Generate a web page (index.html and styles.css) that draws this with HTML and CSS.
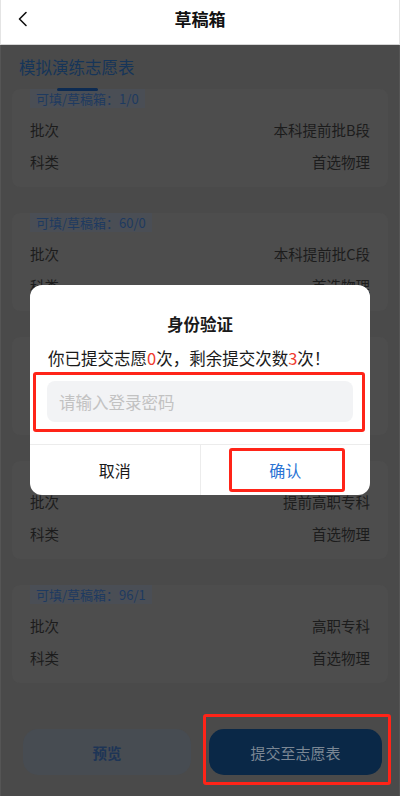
FILE: index.html
```html
<!DOCTYPE html>
<html>
<head>
    <meta charset="utf-8">
    <title>草稿箱</title>
    <link rel="stylesheet" href="styles.css">
</head>
<body>
    <div class="app">
        <div class="header">
            <span class="back">
                <svg width="12" height="16" viewBox="0 0 12 16"><path d="M9 1.5 L2.5 8 L9 14.5" fill="none" stroke="#111" stroke-width="1.6" stroke-linecap="round" stroke-linejoin="round"/></svg>
            </span>
            <h1>草稿箱</h1>
        </div>

        <div class="page">
            <div class="content">
                <div class="section-title">模拟演练志愿表</div>
                <div class="tab-bar"></div>

                <div class="card">
                    <span class="badge">可填/草稿箱：1/0</span>
                    <div class="row"><span>批次</span><span>本科提前批B段</span></div>
                    <div class="row"><span>科类</span><span>首选物理</span></div>
                </div>
                <div class="card">
                    <span class="badge">可填/草稿箱：60/0</span>
                    <div class="row"><span>批次</span><span>本科提前批C段</span></div>
                    <div class="row"><span>科类</span><span>首选物理</span></div>
                </div>
                <div class="card">
                    <span class="badge">可填/草稿箱：45/0</span>
                    <div class="row"><span>批次</span><span>本科批</span></div>
                    <div class="row"><span>科类</span><span>首选物理</span></div>
                </div>
                <div class="card">
                    <span class="badge">可填/草稿箱：30/0</span>
                    <div class="row"><span>批次</span><span>提前高职专科</span></div>
                    <div class="row"><span>科类</span><span>首选物理</span></div>
                </div>
                <div class="card">
                    <span class="badge">可填/草稿箱：96/1</span>
                    <div class="row"><span>批次</span><span>高职专科</span></div>
                    <div class="row"><span>科类</span><span>首选物理</span></div>
                </div>
            </div>

            <div class="footer">
                <button class="btn-preview">预览</button>
                <div class="marked marked-submit">
                    <button class="btn-submit">提交至志愿表</button>
                </div>
            </div>
        </div>
    </div>

    <div class="modal-layer">
        <div class="modal">
            <div class="modal-title">身份验证</div>
            <p class="modal-msg">你已提交志愿<span class="num">0</span>次，剩余提交次数<span class="num">3</span>次！</p>
            <div class="marked marked-input">
                <input type="password" class="pwd" placeholder="请输入登录密码">
            </div>
            <div class="modal-actions">
                <button class="act">取消</button>
                <button class="act act-ok"><span class="marked marked-ok">确认</span></button>
            </div>
        </div>
    </div>
</body>
</html>
```

FILE: styles.css
```css
* {
    box-sizing: border-box;
}
body {
    margin: 0;
    font-family: "Noto Sans CJK SC", "Noto Sans", sans-serif;
    color: #1a1a1a;
    background: #4a4a4a;
    text-spacing-trim: space-all;
}
.app {
    display: flex;
    flex-direction: column;
    height: 100vh;
}
.header {
    position: relative;
    flex-shrink: 0;
    height: 45px;
    background: #fff;
    border-bottom: 1px solid #d6d6d6;
    border-left: 1px solid #e4e4e4;
    border-right: 1px solid #e4e4e4;
    display: flex;
    justify-content: center;
    padding-top: 7px;
}
.header h1 {
    margin: 0;
    font-size: 17px;
    line-height: 24px;
    font-weight: 700;
    color: #111;
}
.back {
    position: absolute;
    left: 16px;
    top: 8px;
}
.page {
    flex: 1;
    display: flex;
    flex-direction: column;
    border-left: 1px solid #555;
    border-right: 1px solid #555;
}
.content {
    flex: 1;
    padding: 10px 11px 0;
}
.section-title {
    font-size: 16.5px;
    line-height: 24px;
    color: #163559;
    padding-left: 7px;
}
.tab-bar {
    position: relative;
    z-index: 1;
    width: 41px;
    height: 3px;
    margin: 9px 0 0 45px;
    border-radius: 2px;
    background: #0d2b52;
}
.card {
    background: #4d4d4d;
    border-radius: 8px;
    padding: 0 18px 9px;
    margin-bottom: 26px;
}
.tab-bar + .card {
    margin-top: -2px;
}
.badge {
    display: block;
    width: fit-content;
    height: 19px;
    line-height: 19px;
    padding: 0 6px;
    font-size: 13px;
    color: #1e3a60;
    background: #4a4e55;
    margin-bottom: 6px;
}
.row {
    display: flex;
    justify-content: space-between;
    height: 32px;
    line-height: 32px;
    font-size: 14.5px;
    color: #1c1c1c;
}
.footer {
    flex-shrink: 0;
    display: flex;
    gap: 18px;
    padding: 0 17px 21px 22px;
}
.footer button {
    height: 46px;
    border: none;
    border-radius: 15px;
    font-family: inherit;
    font-size: 14.5px;
}
.btn-preview {
    flex: 0 0 168px;
    background: #474c52;
    color: #1e3556;
    font-weight: 700;
}
.marked-submit {
    flex: 1;
    display: flex;
}
.btn-submit {
    flex: 1;
    background: #0a2847;
    color: #7b8794;
    font-size: 15px !important;
}
.marked {
    position: relative;
}
.marked::after {
    content: "";
    position: absolute;
    border: 3px solid #ff2418;
    border-radius: 3px;
}
.marked-submit::after {
    top: -15px;
    bottom: -10px;
    left: -6px;
    right: -9px;
}
.modal-layer {
    position: fixed;
    inset: 0;
    display: flex;
    justify-content: center;
    align-items: flex-start;
    padding-top: 285px;
}
.modal {
    width: 340px;
    background: #fff;
    border-radius: 12px;
    padding-top: 28px;
}
.modal-title {
    text-align: center;
    font-size: 16.5px;
    line-height: 22px;
    font-weight: 700;
    color: #1a1a1a;
}
.modal-msg {
    margin: 12px 0 0;
    padding-left: 18px;
    font-size: 16.5px;
    line-height: 22px;
    color: #1a1a1a;
    white-space: nowrap;
}
.num {
    color: #f03a2e;
}
.marked-input {
    margin: 12px 17px 0;
}
.marked-input::after {
    top: -9px;
    bottom: -10px;
    left: -14px;
    right: -12px;
}
.pwd {
    display: block;
    width: 100%;
    height: 41px;
    border: none;
    border-radius: 8px;
    background: #f2f3f5;
    padding: 0 12px;
    font-family: inherit;
    font-size: 16.5px;
    outline: none;
}
.pwd::placeholder {
    color: #c2c2c2;
}
.modal-actions {
    display: flex;
    margin-top: 22px;
    border-top: 1px solid #ececec;
}
.act {
    flex: 1;
    height: 50px;
    border: none;
    background: none;
    font-family: inherit;
    font-size: 16px;
    color: #1a1a1a;
    padding: 0;
}
.act-ok {
    border-left: 1px solid #ececec;
    color: #2a74d4;
    display: flex;
    justify-content: center;
    align-items: center;
}
.marked-ok {
    display: block;
    line-height: 22px;
}
.marked-ok::after {
    top: -11px;
    bottom: -11px;
    left: -40px;
    right: -44px;
}
```
